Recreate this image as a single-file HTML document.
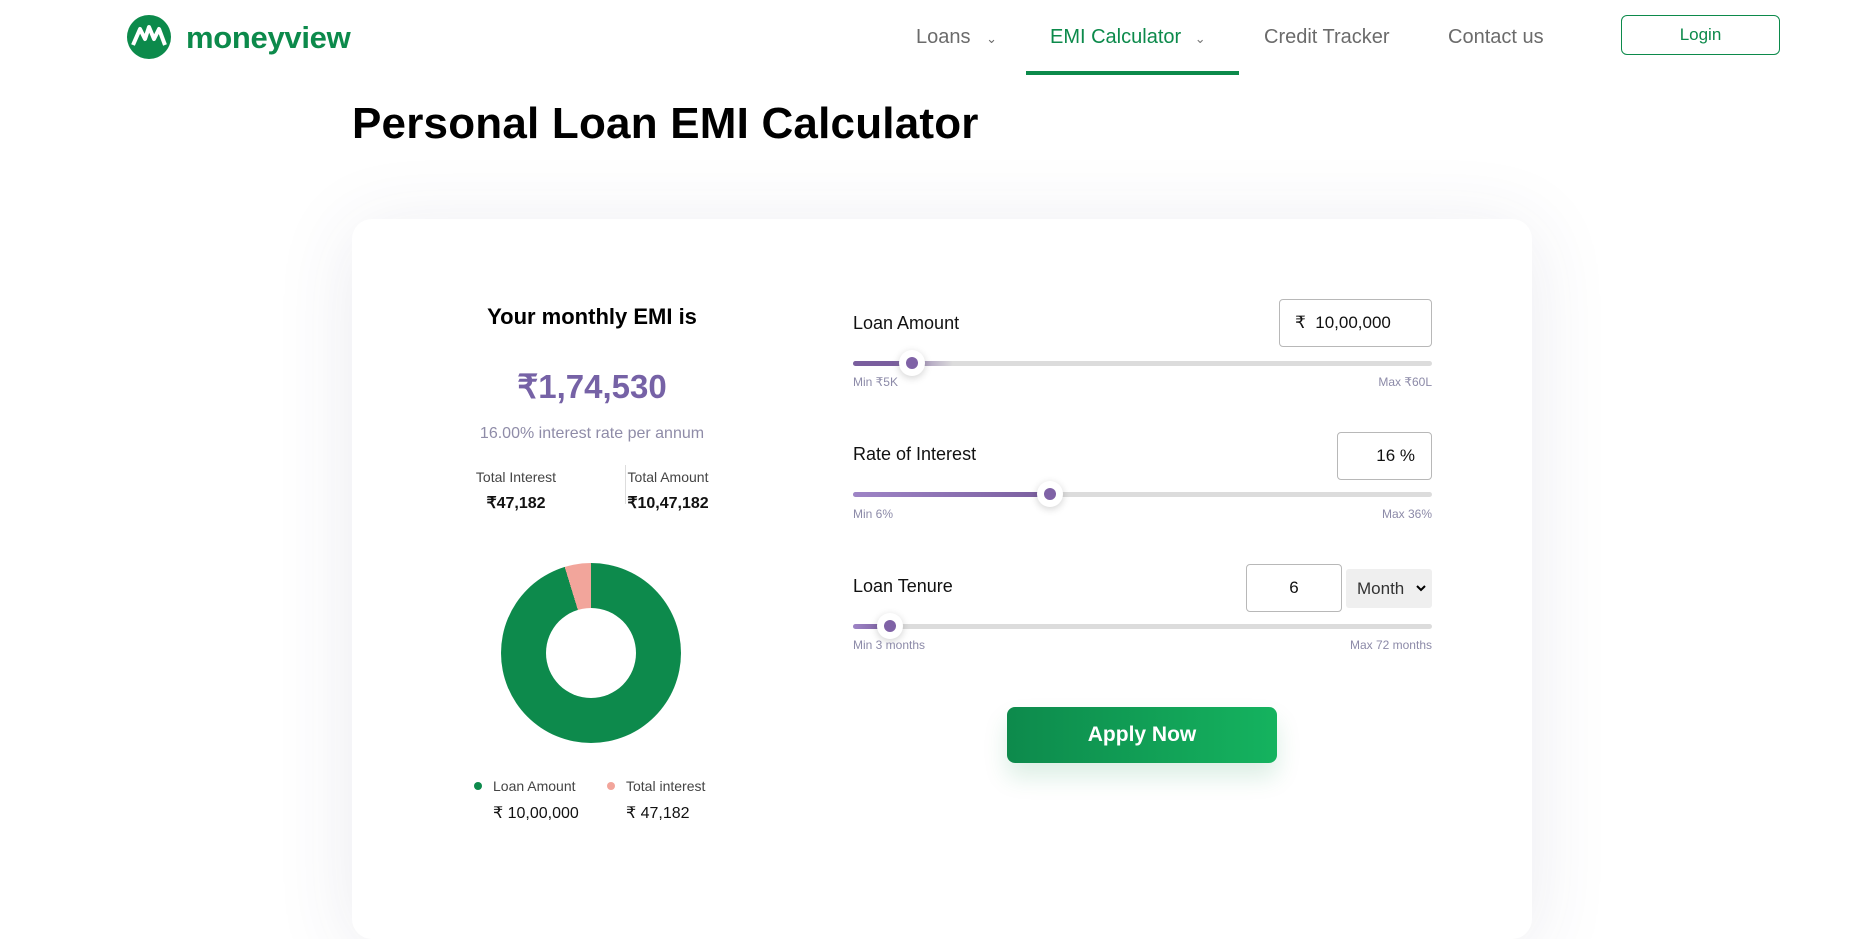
<!DOCTYPE html>
<html><head><meta charset="utf-8"><style>
*{margin:0;padding:0;box-sizing:border-box}
body{width:1854px;height:891px;overflow:hidden;background:#fff;font-family:"Liberation Sans",sans-serif;position:relative;color:#111}
.a{position:absolute;white-space:nowrap}
.c{transform:translateX(-50%)}
.nav{font-size:20px;color:#6b6b6b;top:25px;line-height:24px}
.card{position:absolute;left:352px;top:219px;width:1180px;height:720px;background:#fff;border-radius:20px;box-shadow:0 10px 80px rgba(60,60,110,.10)}
.lbl{font-size:18px;color:#111;line-height:22px}
.inp{position:absolute;border:1px solid #b8b8b8;border-radius:4px;background:#fff;font-size:17px;line-height:20px}
.track{position:absolute;height:5px;border-radius:3px;background:#dcdcdc;left:853px;width:579px}
.fill{position:absolute;height:5px;border-radius:3px;left:853px;background:linear-gradient(90deg,#9e84c6,#7a5e9e)}
.thumb{position:absolute;width:26px;height:26px;border-radius:50%;background:#fff;box-shadow:0 2px 8px rgba(0,0,0,.18)}
.thumb:after{content:"";position:absolute;left:7px;top:7px;width:12px;height:12px;border-radius:50%;background:#7f62a6}
.mm{font-size:12px;color:#8c8aa8;line-height:14px}
</style></head><body>
<svg class="a" style="left:127px;top:15px" width="44" height="44" viewBox="0 0 44 44"><circle cx="22" cy="22" r="22" fill="#0c8a4b"/><path d="M6 30 L13 14 L18 24 L22 12 L27 24 L32 14 L38 30" fill="none" stroke="#fff" stroke-width="4" stroke-linejoin="round"/></svg>
<div class="a" style="left:186px;top:21px;font-size:31px;font-weight:bold;color:#0c8a4b;letter-spacing:-0.3px;line-height:34px">moneyview</div>
<div class="a nav" style="left:916px">Loans <span style="font-size:13px;margin-left:10px">&#8964;</span></div>
<div class="a nav" style="left:1050px;color:#0c8a4b">EMI Calculator <span style="font-size:13px;margin-left:8px;color:#777">&#8964;</span></div>
<div class="a" style="left:1026px;top:71px;width:213px;height:4px;background:#0c8a4b"></div>
<div class="a nav" style="left:1264px">Credit Tracker</div>
<div class="a nav" style="left:1448px">Contact us</div>
<div class="a" style="left:1621px;top:15px;width:159px;height:40px;border:1.5px solid #0c8a4b;border-radius:6px;color:#0c8a4b;font-size:17px;text-align:center;line-height:37px">Login</div>
<div class="a" style="left:352px;top:98px;font-size:44px;font-weight:bold;line-height:52px;color:#000;letter-spacing:0.2px">Personal Loan EMI Calculator</div>
<div class="card"></div>
<div class="a c" style="left:592px;top:304px;font-size:22px;font-weight:bold;line-height:26px;color:#000">Your monthly EMI is</div>
<div class="a c" style="left:592px;top:367px;font-size:33px;font-weight:bold;line-height:40px;color:#7662a6">₹1,74,530</div>
<div class="a c" style="left:592px;top:424px;font-size:16px;line-height:20px;color:#8f8ca8">16.00% interest rate per annum</div>
<div class="a c" style="left:516px;top:469px;font-size:14px;line-height:17px;color:#444">Total Interest</div>
<div class="a c" style="left:516px;top:494px;font-size:16px;font-weight:bold;line-height:20px">₹47,182</div>
<div class="a" style="left:625px;top:465px;width:1px;height:39px;background:#ddd"></div>
<div class="a c" style="left:668px;top:469px;font-size:14px;line-height:17px;color:#444">Total Amount</div>
<div class="a c" style="left:668px;top:494px;font-size:16px;font-weight:bold;line-height:20px">₹10,47,182</div>
<div class="a" style="left:501px;top:563px;width:180px;height:180px;border-radius:50%;background:conic-gradient(#0d8a4c 0 343deg,#f2a59b 0)"></div>
<div class="a" style="left:546px;top:608px;width:90px;height:90px;border-radius:50%;background:#fff"></div>
<div class="a" style="left:474px;top:782px;width:8px;height:8px;border-radius:50%;background:#0d8a4c"></div>
<div class="a" style="left:493px;top:778px;font-size:14px;line-height:17px;color:#444">Loan Amount</div>
<div class="a" style="left:607px;top:782px;width:8px;height:8px;border-radius:50%;background:#f2a59b"></div>
<div class="a" style="left:626px;top:778px;font-size:14px;line-height:17px;color:#444">Total interest</div>
<div class="a" style="left:493px;top:804px;font-size:16px;line-height:20px">₹ 10,00,000</div>
<div class="a" style="left:626px;top:804px;font-size:16px;line-height:20px">₹ 47,182</div>

<div class="a lbl" style="left:853px;top:312px">Loan Amount</div>
<div class="inp" style="left:1279px;top:299px;width:153px;height:48px;padding:13px 0 0 15px">₹&nbsp; 10,00,000</div>
<div class="track" style="top:361px"></div>
<div class="fill" style="top:361px;width:100px;background:linear-gradient(90deg,#7a5e9e 40%,#dcdcdc)"></div>
<div class="thumb" style="left:899px;top:350px"></div>
<div class="a mm" style="left:853px;top:375px">Min ₹5K</div>
<div class="a mm" style="left:1432px;top:375px;transform:translateX(-100%)">Max ₹60L</div>

<div class="a lbl" style="left:853px;top:443px">Rate of Interest</div>
<div class="inp" style="left:1337px;top:432px;width:95px;height:48px;padding:13px 16px 0 0;text-align:right">16 %</div>
<div class="track" style="top:492px"></div>
<div class="fill" style="top:492px;width:197px"></div>
<div class="thumb" style="left:1037px;top:481px"></div>
<div class="a mm" style="left:853px;top:507px">Min 6%</div>
<div class="a mm" style="left:1432px;top:507px;transform:translateX(-100%)">Max 36%</div>

<div class="a lbl" style="left:853px;top:575px">Loan Tenure</div>
<div class="inp" style="left:1246px;top:564px;width:96px;height:48px;padding:13px 0 0 0;text-align:center">6</div>
<div class="a" style="left:1346px;top:569px;width:86px;height:39px;background:#efefef;border-radius:3px;font-size:17px;line-height:39px;padding-left:11px;color:#333">Month
<svg style="position:absolute;left:70px;top:16px" width="10" height="7" viewBox="0 0 10 7"><path d="M1 1 L5 5 L9 1" fill="none" stroke="#000" stroke-width="2"/></svg></div>
<div class="track" style="top:624px"></div>
<div class="fill" style="top:624px;width:35px"></div>
<div class="thumb" style="left:877px;top:613px"></div>
<div class="a mm" style="left:853px;top:638px">Min 3 months</div>
<div class="a mm" style="left:1432px;top:638px;transform:translateX(-100%)">Max 72 months</div>

<div class="a" style="left:1007px;top:707px;width:270px;height:56px;border-radius:8px;background:linear-gradient(90deg,#0d8a4c,#15b35f);box-shadow:0 14px 24px rgba(13,138,76,.15);color:#fff;font-size:21px;font-weight:bold;text-align:center;line-height:56px">Apply Now</div>
</body></html>
